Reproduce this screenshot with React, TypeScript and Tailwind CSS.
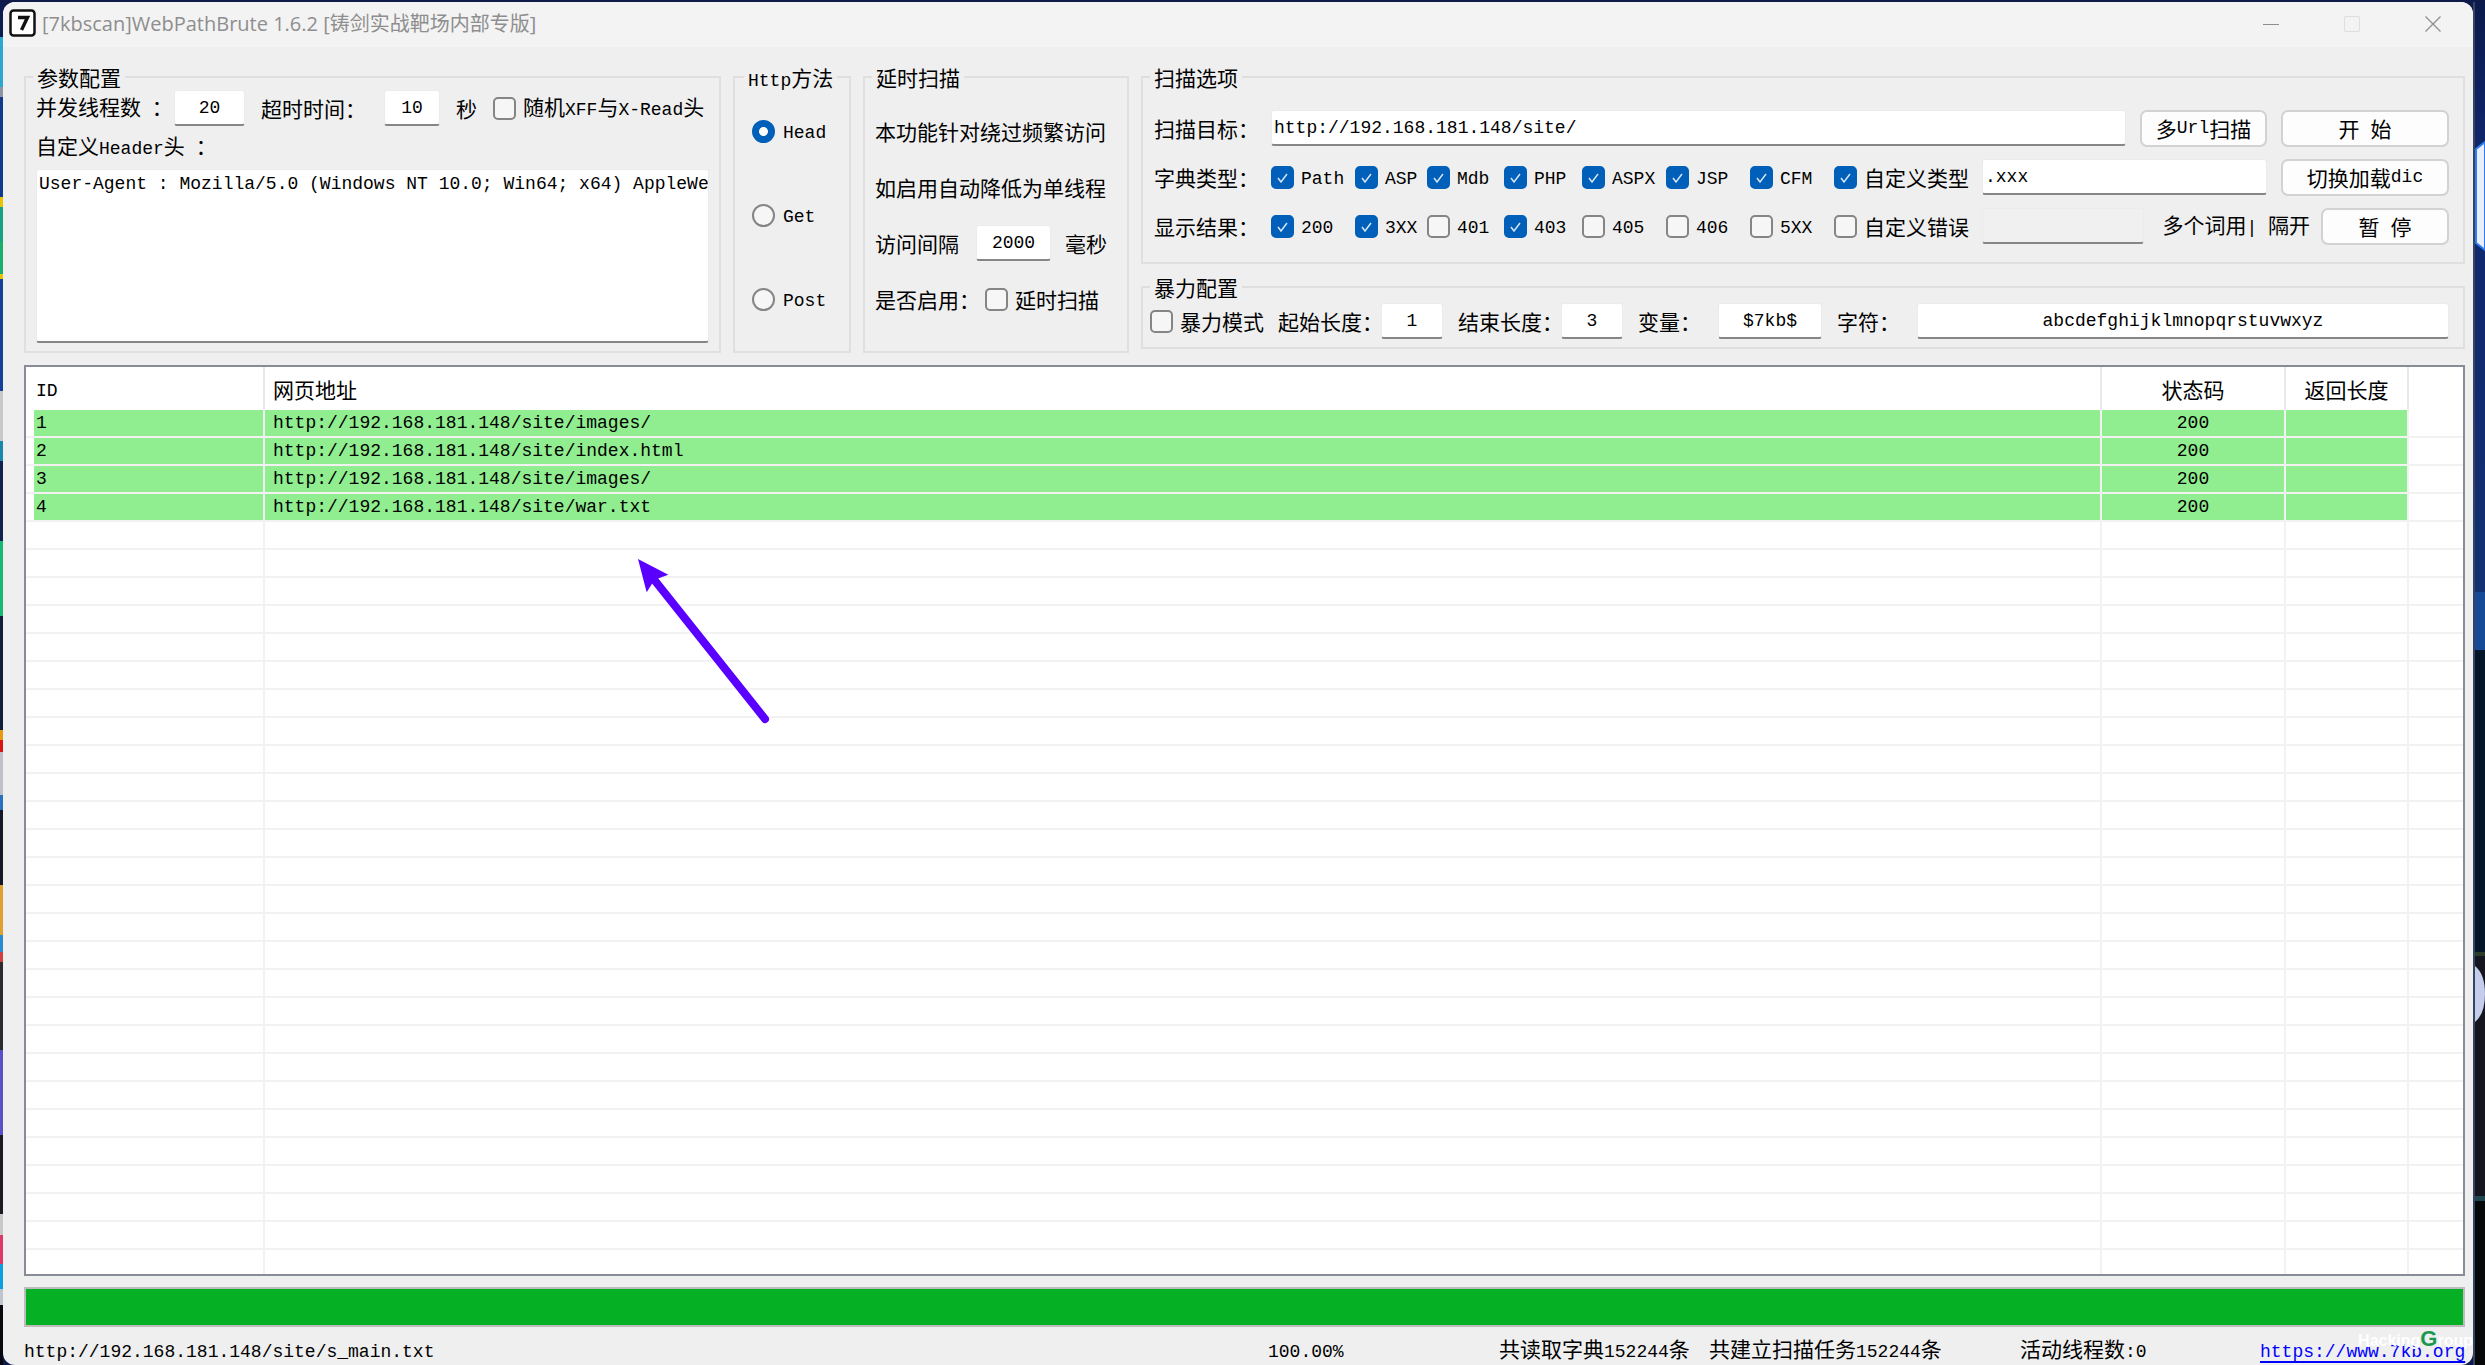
import React, { useId } from "react";

const INPUT =
  "h-9 min-w-0 rounded-[3px] border border-b-2 border-[#ebebeb] border-b-[#868686] bg-white font-['Liberation_Mono','Noto_Sans_CJK_SC',monospace] text-[18px] leading-6 text-black outline-none disabled:bg-[#f0f0f0]";
const BUTTON =
  "flex h-[37px] shrink-0 items-center justify-center whitespace-pre rounded-[7px] border-2 border-[#d2d2d2] bg-[#fdfdfd]";

/* Chinese glyphs keep the 21px body size; Latin runs use the half-width mono face. */
function Mixed({ children }: { children: string }) {
  return (
    <>
      {children.split(/([\x20-\x7e]+)/).map((part, i) =>
        i % 2 ? (
          <span key={i} className="font-['Liberation_Mono',monospace] text-[18px]">
            {part}
          </span>
        ) : (
          part
        ),
      )}
    </>
  );
}

function Check({ label, checked = false, className = "" }: { label: string; checked?: boolean; className?: string }) {
  const id = useId();
  return (
    <div className={`flex shrink-0 items-center gap-[7px] ${className}`}>
      <span className="grid size-[23px] shrink-0">
        <input
          id={id}
          type="checkbox"
          defaultChecked={checked}
          className="peer col-start-1 row-start-1 size-[23px] appearance-none rounded-[5px] border-2 border-[#858585] bg-[#f6f6f6] checked:border-[#005fb8] checked:bg-[#005fb8]"
        />
        <svg
          viewBox="0 0 23 23"
          className="pointer-events-none invisible col-start-1 row-start-1 size-[23px] peer-checked:visible"
          fill="none"
          stroke="#d6e6f5"
          strokeWidth="1.5"
        >
          <path d="M7 12l3 4 6-8" />
        </svg>
      </span>
      <label htmlFor={id} className="whitespace-nowrap">
        <Mixed>{label}</Mixed>
      </label>
    </div>
  );
}

function Group({ title, className = "", children }: { title: string; className?: string; children: React.ReactNode }) {
  return (
    <fieldset className={`min-w-0 border-2 border-[#dfdfdf] ${className}`}>
      <legend className="h-[22px] px-1 leading-[22px]">
        <Mixed>{title}</Mixed>
      </legend>
      {children}
    </fieldset>
  );
}

function Field({ id, label, value, labelClass, inputClass }: { id: string; label: string; value: string; labelClass: string; inputClass: string }) {
  return (
    <>
      <label htmlFor={id} className={`shrink-0 whitespace-nowrap ${labelClass}`}>
        <Mixed>{label}</Mixed>
      </label>
      <input id={id} defaultValue={value} className={`${INPUT} text-center ${inputClass}`} />
    </>
  );
}

const CELL_WIDTHS = ["w-[84px]", "w-[72px]", "w-[77px]", "w-[78px]", "w-[84px]", "w-[84px]", "w-[84px]"];
const TYPES = ["Path", "ASP", "Mdb", "PHP", "ASPX", "JSP", "CFM"];
const CODES = ["200", "3XX", "401", "403", "405", "406", "5XX"];
const CODES_ON = ["200", "3XX", "403"];

const RESULTS = [
  "http://192.168.181.148/site/images/",
  "http://192.168.181.148/site/index.html",
  "http://192.168.181.148/site/images/",
  "http://192.168.181.148/site/war.txt",
];

const LEFT_STRIP: [number, string][] = [
  [35, "#0c1c52"], [50, "#2aa8d0"], [10, "#8b95a5"], [100, "#123a8a"], [10, "#e8c400"], [35, "#16a085"],
  [33, "#17b06b"], [5, "#e8c400"], [112, "#16409a"], [50, "#c8c8c8"], [20, "#1a88a8"], [80, "#10224e"],
  [75, "#18b872"], [115, "#10203c"], [10, "#e59a10"], [12, "#d81414"], [43, "#c0c0c8"], [15, "#2a70c0"],
  [75, "#14182a"], [50, "#e0a030"], [17, "#2a8ad0"], [10, "#d04040"], [88, "#2a2a30"], [85, "#5a50c8"],
  [80, "#1a1a20"], [21, "#c8c8c8"], [29, "#e03868"], [25, "#0a9fe0"], [16, "#c0c4cc"], [60, "#08090c"],
];

function Results() {
  const line = "border-r-2 border-b-2 border-[#f2f2f2] p-0";
  return (
    <div className="relative mt-3 min-h-0 flex-1 overflow-hidden border-2 border-[#878c96] bg-white">
      <table className="w-full table-fixed border-separate border-spacing-0">
        <colgroup>
          <col className="w-2" />
          <col className="w-[231px]" />
          <col />
          <col className="w-[184px]" />
          <col className="w-[123px]" />
          <col className="w-[54px]" />
        </colgroup>
        <thead>
          <tr className="h-[43px]">
            <th className="p-0" />
            <th className="border-r-2 border-[#eaeaea] p-0 pl-0.5 text-left font-normal"><Mixed>ID</Mixed></th>
            <th className="border-r-2 border-[#eaeaea] p-0 pl-2 text-left font-normal">网页地址</th>
            <th className="border-r-2 border-[#eaeaea] p-0 font-normal">状态码</th>
            <th className="border-r-2 border-[#eaeaea] p-0 font-normal">返回长度</th>
            <th className="p-0" />
          </tr>
        </thead>
        <tbody className="font-['Liberation_Mono',monospace] text-[18px] leading-[26px]">
          {Array.from({ length: 31 }, (_, i) => {
            const url = RESULTS[i];
            const cell = url ? `${line} bg-[#90ee90] bg-clip-padding` : line;
            return (
              <tr key={i} className="h-7">
                <td className="border-b-2 border-[#f2f2f2] p-0" />
                <td className={`${cell} pl-0.5`}>{url && i + 1}</td>
                <td className={`${cell} pl-2`}>{url}</td>
                <td className={`${cell} text-center`}>{url && "200"}</td>
                <td className={cell} />
                <td className="border-b-2 border-[#f2f2f2] p-0" />
              </tr>
            );
          })}
        </tbody>
      </table>
      <svg viewBox="0 0 660 660" className="pointer-events-none absolute top-[153px] left-[574px] size-[220px]">
        <path d="M165 182L495 597" stroke="#5a00ff" strokeWidth="24" strokeLinecap="round" />
        <path d="M114 117L205 164L176 175L157 190L140 217Z" fill="#5a00ff" />
      </svg>
    </div>
  );
}

export default function App() {
  return (
    <div className="flex h-screen w-full overflow-hidden bg-[#0d1a4a] pt-0.5 font-['Noto_Sans_CJK_SC',sans-serif] text-[21px] leading-6 text-black">
      <div className="flex w-[3px] shrink-0 flex-col">
        {LEFT_STRIP.map(([h, color], i) => (
          <div key={i} style={{ flexGrow: h, backgroundColor: color }} />
        ))}
      </div>

      <main className="relative flex min-w-0 flex-1 flex-col overflow-hidden rounded-[12px] bg-[#efefef]">
        <header className="flex h-[45px] shrink-0 items-center bg-[#f3f3f3] pl-1.5 text-[#8e8e8e]">
          <svg viewBox="0 0 27 28" className="mb-1 h-7 w-[27px]">
            <rect x="1.5" y="1.5" width="24" height="25" rx="3" fill="#fff" stroke="#111" strokeWidth="2.5" />
            <path d="M9 8.5h9.5L12.5 21" fill="none" stroke="#111" strokeWidth="3.4" />
          </svg>
          <h1 className="mb-0.5 ml-1.5 flex-1 font-['Open_Sans','Noto_Sans_CJK_SC',sans-serif] text-[20px] font-normal">
            [7kbscan]WebPathBrute 1.6.2 [铸剑实战靶场内部专版]
          </h1>
          <button aria-label="Minimize" className="mb-0.5 flex w-[81px] justify-center">
            <svg viewBox="0 0 16 16" className="size-4" stroke="#8e8e8e"><path d="M0 8.5h16" /></svg>
          </button>
          <button aria-label="Maximize" disabled className="mb-0.5 flex w-[81px] justify-center">
            <svg viewBox="0 0 16 16" className="size-4" fill="none" stroke="#dedede"><rect x="0.5" y="0.5" width="15" height="15" rx="1.5" /></svg>
          </button>
          <button aria-label="Close" className="mb-0.5 flex w-[81px] justify-center">
            <svg viewBox="0 0 16 16" className="size-4" stroke="#8e8e8e" strokeWidth="1.3"><path d="M0.5 0.5l15 15M15.5 0.5l-15 15" /></svg>
          </button>
        </header>

        <div className="flex min-h-0 flex-1 flex-col pt-[19px] pr-2 pl-[21px]">
          <div className="grid shrink-0 grid-cols-[697px_118px_266px_minmax(0,1fr)] gap-3">
            <Group title="参数配置" className="px-[7px] pb-2">
              <div className="px-[3px] pt-0.5">
                <div className="flex h-9 items-center">
                  <Field id="threads" label="并发线程数 ：" value="20" labelClass="w-[138px]" inputClass="w-[71px]" />
                  <Field id="timeout" label="超时时间：" value="10" labelClass="ml-4 w-[123px]" inputClass="w-[56px]" />
                  <span className="mx-4">秒</span>
                  <Check label="随机XFF与X-Read头" />
                </div>
                <label htmlFor="headers" className="mt-[7px] block">
                  <Mixed>自定义Header头 ：</Mixed>
                </label>
                <textarea
                  id="headers"
                  wrap="off"
                  defaultValue="User-Agent : Mozilla/5.0 (Windows NT 10.0; Win64; x64) AppleWebKit/537.36"
                  className="mt-2 block h-[174px] w-full resize-none overflow-hidden rounded-[3px] border border-b-2 border-[#ebebeb] border-b-[#868686] bg-white px-0.5 py-0.5 font-['Liberation_Mono',monospace] text-[18px] leading-6 outline-none"
                />
              </div>
            </Group>

            <Group title="Http方法" className="px-[9px]">
              <div className="flex flex-col gap-[60px] pt-[31px] pl-2">
                {["Head", "Get", "Post"].map((m, i) => (
                  <div key={m} className="flex h-6 items-center gap-2">
                    <input
                      id={`method-${m}`}
                      type="radio"
                      name="method"
                      defaultChecked={i === 0}
                      className="size-[23px] shrink-0 appearance-none rounded-full border-2 border-[#858585] bg-[#f6f6f6] checked:border-[7px] checked:border-[#005fb8] checked:bg-white"
                    />
                    <label htmlFor={`method-${m}`}><Mixed>{m}</Mixed></label>
                  </div>
                ))}
              </div>
            </Group>

            <Group title="延时扫描" className="px-[7px]">
              <div className="flex flex-col gap-5 pt-[25px] pl-[3px] whitespace-nowrap">
                <p className="h-9 leading-9">本功能针对绕过频繁访问</p>
                <p className="h-9 leading-9">如启用自动降低为单线程</p>
                <div className="flex h-9 items-center">
                  <Field id="delay" label="访问间隔" value="2000" labelClass="w-[101px]" inputClass="w-[75px]" />
                  <span className="ml-[14px]">毫秒</span>
                </div>
                <div className="flex h-9 items-center">
                  <span className="w-[110px]">是否启用：</span>
                  <Check label="延时扫描" />
                </div>
              </div>
            </Group>

            <div className="flex min-w-0 flex-col gap-3">
              <Group title="扫描选项" className="px-[7px] pb-[18px]">
                <div className="flex flex-col gap-[13px] pt-[22px] pr-[7px] pl-1">
                  <div className="flex h-9 items-center">
                    <label htmlFor="target" className="w-[117px] shrink-0">扫描目标：</label>
                    <input id="target" defaultValue="http://192.168.181.148/site/" className={`${INPUT} flex-1 px-0.5`} />
                    <button className={`${BUTTON} ml-[14px] w-[127px]`}><Mixed>多Url扫描</Mixed></button>
                    <button className={`${BUTTON} ml-[14px] w-[168px]`}><Mixed>开 始</Mixed></button>
                  </div>
                  <div className="flex h-9 items-center">
                    <span className="w-[117px] shrink-0">字典类型：</span>
                    {TYPES.map((t, i) => (
                      <Check key={t} label={t} checked className={CELL_WIDTHS[i]} />
                    ))}
                    <Check label="自定义类型" checked className="w-[148px]" />
                    <input aria-label="自定义类型" defaultValue=".xxx" className={`${INPUT} flex-1 px-0.5`} />
                    <button className={`${BUTTON} ml-[14px] w-[168px]`}><Mixed>切换加载dic</Mixed></button>
                  </div>
                  <div className="flex h-9 items-center">
                    <span className="w-[117px] shrink-0">显示结果：</span>
                    {CODES.map((c, i) => (
                      <Check key={c} label={c} checked={CODES_ON.includes(c)} className={CELL_WIDTHS[i]} />
                    ))}
                    <Check label="自定义错误" className="w-[148px]" />
                    <input aria-label="自定义错误" disabled className={`${INPUT} flex-1`} />
                    <span className="ml-[18px] shrink-0 whitespace-pre"><Mixed>多个词用| 隔开</Mixed></span>
                    <button className={`${BUTTON} ml-[11px] w-[128px]`}><Mixed>暂 停</Mixed></button>
                  </div>
                </div>
              </Group>

              <Group title="暴力配置" className="px-[7px] pb-2">
                <div className="flex h-[41px] items-center pt-[5px] pr-[7px]">
                  <Check label="暴力模式" className="w-[128px]" />
                  <Field id="min" label="起始长度：" value="1" labelClass="w-[103px]" inputClass="w-[62px]" />
                  <Field id="max" label="结束长度：" value="3" labelClass="ml-[15px] w-[103px]" inputClass="w-[62px]" />
                  <Field id="var" label="变量：" value="$7kb$" labelClass="ml-[15px] w-20" inputClass="w-[104px]" />
                  <Field id="chars" label="字符：" value="abcdefghijklmnopqrstuvwxyz" labelClass="ml-[15px] w-20" inputClass="flex-1" />
                </div>
              </Group>
            </div>
          </div>

          <Results />

          <div role="progressbar" aria-label="扫描进度" aria-valuenow={100} className="mt-[11px] h-10 shrink-0 border-2 border-[#bcbcbc] bg-[#06b025]" />

          <footer className="grid h-[38px] shrink-0 grid-cols-[minmax(0,1fr)_231px_210px_311px_240px_205px] items-center pt-2 whitespace-nowrap">
            <span><Mixed>http://192.168.181.148/site/s_main.txt</Mixed></span>
            <span><Mixed>100.00%</Mixed></span>
            <span><Mixed>共读取字典152244条</Mixed></span>
            <span><Mixed>共建立扫描任务152244条</Mixed></span>
            <span><Mixed>活动线程数:0</Mixed></span>
            <a href="https://www.7kb.org" className="text-[#0000ff] underline decoration-2 underline-offset-4">
              <Mixed>https://www.7kb.org</Mixed>
            </a>
          </footer>
        </div>

        <div className="pointer-events-none absolute right-0 bottom-3 flex items-baseline font-['Liberation_Sans',sans-serif] text-[16px] leading-6 font-bold text-white">
          Hacking<span className="text-[22px] text-[#1a9850]">G</span>roup
        </div>
      </main>

      <div className="w-3 shrink-0 border-l-2 border-[#36455f]">
        <svg viewBox="0 0 10 1363" preserveAspectRatio="none" className="block h-full w-full">
          <defs>
            <linearGradient id="sky" x1="0" y1="0" x2="0" y2="1">
              <stop offset="0" stopColor="#0b1a4c" />
              <stop offset="0.25" stopColor="#10266c" />
              <stop offset="1" stopColor="#123072" />
            </linearGradient>
          </defs>
          <rect width="10" height="590" fill="url(#sky)" />
          <rect y="590" width="10" height="58" fill="#174a96" />
          <rect y="648" width="10" height="302" fill="#04152a" />
          <rect y="950" width="10" height="4" fill="#2c3a2a" />
          <rect y="954" width="10" height="240" fill="#14151f" />
          <rect y="1194" width="10" height="5" fill="#1d4650" />
          <rect y="1199" width="10" height="164" fill="#060708" />
          <path d="M10 140L1 147V241L10 248Z" fill="#e8eefc" stroke="#2f7bf0" strokeWidth="2" />
          <path d="M0 964Q10 972 10 992Q10 1012 0 1020Z" fill="#c5cdec" />
        </svg>
      </div>
    </div>
  );
}
